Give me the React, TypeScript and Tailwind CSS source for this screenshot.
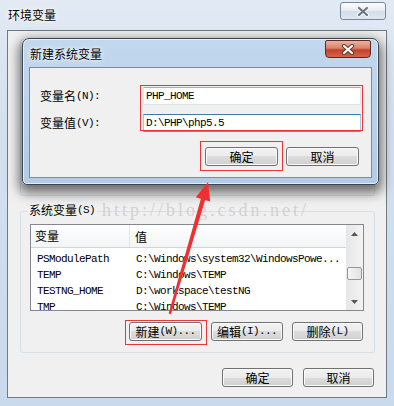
import React from "react";

const cjk = "font-['Noto_Sans_CJK_SC',sans-serif] text-[12px] leading-none";
const mono = "font-['Liberation_Mono','Noto_Sans_CJK_SC',monospace] text-[11px] leading-none tracking-[-0.6px]";

function Label({ zh, en }: { zh: string; en: string }) {
  return (
    <span className="flex items-center whitespace-nowrap text-black">
      <span className={cjk}>{zh}</span>
      <span className={mono}>{en}</span>
    </span>
  );
}

function Btn({ w, children }: { w: string; children: React.ReactNode }) {
  return (
    <div
      className={`${w} flex h-[19px] items-center justify-center rounded-[3px] border border-[#707070] bg-[linear-gradient(180deg,#f2f2f2_0%,#ebebeb_50%,#dddddd_50%,#cfcfcf_100%)] shadow-[inset_0_0_0_1px_#fbfbfb]`}
    >
      {children}
    </div>
  );
}

function CloseX({ fg, bg }: { fg: string; bg: string }) {
  return (
    <svg width="14" height="11" viewBox="0 0 14 11">
      <path d="M3 2 L11 9 M11 2 L3 9" stroke={bg} strokeWidth="4.2" strokeLinecap="round" />
      <path d="M3 2 L11 9 M11 2 L3 9" stroke={fg} strokeWidth="2.2" strokeLinecap="round" />
    </svg>
  );
}

const rows = [
  ["PSModulePath", "C:\\Windows\\system32\\WindowsPowe..."],
  ["TEMP", "C:\\Windows\\TEMP"],
  ["TESTNG_HOME", "D:\\workspace\\testNG"],
  ["TMP", "C:\\Windows\\TEMP"],
];

export default function App() {
  return (
    <div className="relative h-[406px] w-[394px] overflow-hidden bg-[linear-gradient(180deg,#e2eaf4_0%,#d3e0ee_30%,#c9daec_100%)]">
      {/* outer window title bar */}
      <div className="flex h-[30px] items-start justify-between pl-[8px] pr-[8px] pt-[2px]">
        <span className={`${cjk} mt-[7px] text-black [text-shadow:0_0_6px_#fff,0_0_3px_#fff]`}>环境变量</span>
        <div className="flex h-[18px] w-[46px] items-center justify-center rounded-[3px] border border-[#7b8797] bg-[linear-gradient(180deg,#fbfdff_0%,#e4ebf3_50%,#d4dde8_50%,#dfe7f0_100%)]">
          <CloseX fg="#6d7580" bg="#f4f6f8" />
        </div>
      </div>

      {/* outer client area */}
      <div className="mx-[7px] flex h-[368px] flex-col border border-[#6f7a86] bg-[#f0f0f0]">
        <div className="ml-[12px] mr-[11px] mt-[8px] h-[157px] rounded-[3px] border border-[#d5dfe5]" />

        <div className="relative ml-[12px] mr-[11px] mt-[15px] rounded-[3px] border border-[#d5dfe5] px-[10px] pb-[11px] pt-[12px] pl-[9px]">
          <div className="absolute left-[6px] top-[-8px] bg-[#f0f0f0] px-[2px]">
            <Label zh="系统变量" en="(S)" />
          </div>

          <div className="flex h-[87px] border border-[#828790] bg-white">
            <div className="flex min-w-0 flex-1 flex-col overflow-hidden">
              <div className="flex h-[23px] shrink-0 items-center border-b border-[#d5d5d5] bg-[linear-gradient(180deg,#ffffff_0%,#f3f4f6_100%)]">
                <div className="flex h-full w-[99px] items-center border-r border-[#e5e5e5] pl-[4px]">
                  <span className={cjk}>变量</span>
                </div>
                <div className="pl-[5px]">
                  <span className={cjk}>值</span>
                </div>
              </div>
              <div className="mt-[3px] flex flex-col">
                {rows.map(([n, v]) => (
                  <div key={n} className="flex h-[16px] shrink-0 items-center whitespace-nowrap text-black">
                    <span className={`${mono} w-[99px] pl-[6px]`}>{n}</span>
                    <span className={`${mono} pl-[6px]`}>{v}</span>
                  </div>
                ))}
              </div>
            </div>
            <div className="flex w-[17px] flex-col bg-[linear-gradient(90deg,#e6e6e6_0%,#f3f3f3_100%)]">
              <div className="flex h-[17px] items-center justify-center">
                <svg width="7" height="4" viewBox="0 0 7 4">
                  <path d="M0 4 L3.5 0 L7 4 Z" fill="#555" />
                </svg>
              </div>
              <div className="flex-1">
                <div className="mx-[1px] mt-[25px] h-[13px] rounded-[2px] border border-[#979797] bg-[linear-gradient(90deg,#f4f4f4_0%,#e2e2e2_100%)]" />
              </div>
              <div className="flex h-[17px] items-center justify-center">
                <svg width="7" height="4" viewBox="0 0 7 4">
                  <path d="M0 0 L7 0 L3.5 4 Z" fill="#555" />
                </svg>
              </div>
            </div>
          </div>

          <div className="mt-[11px] flex justify-end gap-[9px] pr-[1px]">
            <Btn w="w-[73px]">
              <Label zh="新建" en="(W)..." />
            </Btn>
            <Btn w="w-[72px]">
              <Label zh="编辑" en="(I)..." />
            </Btn>
            <Btn w="w-[71px]">
              <Label zh="删除" en="(L)" />
            </Btn>
          </div>
        </div>

        <div className="mr-[12px] mt-[15px] flex justify-end gap-[10px]">
          <Btn w="w-[71px]">
            <span className={cjk}>确定</span>
          </Btn>
          <Btn w="w-[71px]">
            <span className={cjk}>取消</span>
          </Btn>
        </div>
      </div>

      {/* watermark */}
      <div className="pointer-events-none absolute left-[102px] top-[201px] font-['Liberation_Serif',serif] text-[18px] leading-none tracking-[3px] text-[#d2d2d2]">
        http://blog.csdn.net/
      </div>

      {/* 新建系统变量 dialog */}
      <div className="absolute left-[22px] top-[38px] flex h-[147px] w-[357px] flex-col rounded-b-[5px] rounded-t-[7px] border border-[#3c4650] bg-[linear-gradient(180deg,#c2d8ee_0%,#b8d0ea_60%,#b2cbe6_100%)] shadow-[0_5px_12px_3px_rgba(0,0,0,0.55),inset_0_0_0_1px_rgba(255,255,255,0.65)]">
        <div className="flex h-[28px] items-start justify-between pl-[7px] pr-[7px] pt-[1px]">
          <span className={`${cjk} mt-[8px] text-black [text-shadow:0_0_6px_#fff,0_0_3px_#fff]`}>新建系统变量</span>
          <div className="flex h-[18px] w-[46px] items-center justify-center rounded-b-[4px] rounded-t-[2px] border border-[#5b2a22] bg-[linear-gradient(180deg,#eab3a2_0%,#d9826a_45%,#c2412a_55%,#d4654a_100%)]">
            <CloseX fg="#ffffff" bg="#5a3a34" />
          </div>
        </div>
        <div className="mx-[6px] flex h-[111px] flex-col border border-[#7f8a96] bg-[#f0f0f0] pl-[10px] pr-[10px] pt-[19px]">
          <div className="grid grid-cols-[103px_1fr] items-center gap-y-[9px]">
            <Label zh="变量名" en="(N):" />
            <div className="flex h-[18px] items-center border border-[#dfe3ea] border-t-[#abadb3] bg-white pl-[2px]">
              <span className={mono}>PHP_HOME</span>
            </div>
            <Label zh="变量值" en="(V):" />
            <div className="flex h-[18px] items-center border border-[#a8c8e2] border-t-[#3d7bad] border-b-[#5a93c2] bg-white pl-[2px]">
              <span className={mono}>D:\PHP\php5.5</span>
            </div>
          </div>
          <div className="mt-[15px] flex justify-end gap-[8px] pr-[2px]">
            <Btn w="w-[73px]">
              <span className={cjk}>确定</span>
            </Btn>
            <Btn w="w-[73px]">
              <span className={cjk}>取消</span>
            </Btn>
          </div>
        </div>
      </div>

      {/* annotations */}
      <div className="pointer-events-none absolute left-[140px] top-[85px] h-[46px] w-[223px] border border-[#ee3535]" />
      <div className="pointer-events-none absolute left-[200px] top-[141px] h-[30px] w-[83px] border border-[#ee3535]" />
      <div className="pointer-events-none absolute left-[125px] top-[320px] h-[25px] w-[82px] border border-[#ee3535]" />
      <svg className="pointer-events-none absolute left-0 top-0" width="394" height="406" viewBox="0 0 394 406">
        <polygon
          points="208,182 210.2,201.4 205.1,199.9 171,314.3 168.6,313.6 200.9,198.7 195.8,197.3"
          fill="#f03030"
        />
      </svg>
    </div>
  );
}
